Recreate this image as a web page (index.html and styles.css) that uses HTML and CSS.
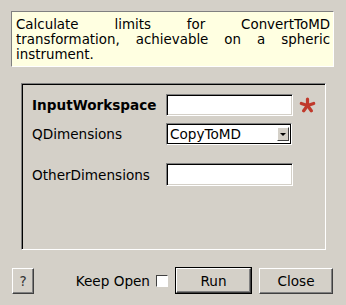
FILE: index.html
```html
<!DOCTYPE html>
<html>
<head>
<meta charset="utf-8">
<link rel="stylesheet" href="styles.css">
</head>
<body>
<div class="dialog">
  <div class="desc">Calculate limits for ConvertToMD transformation, achievable on a spheric instrument.</div>
  <div class="group">
    <div class="row r1">
      <span class="label bold">InputWorkspace</span>
      <span class="field"></span>
      <svg class="star" width="17" height="16" viewBox="0 0 17 16">
        <g stroke="#c0392b" stroke-width="3.2" stroke-linecap="round">
          <line x1="8.5" y1="8.5" x2="8.5" y2="2"/>
          <line x1="8.5" y1="8.5" x2="14.7" y2="6.5"/>
          <line x1="8.5" y1="8.5" x2="12.3" y2="13.8"/>
          <line x1="8.5" y1="8.5" x2="4.7" y2="13.8"/>
          <line x1="8.5" y1="8.5" x2="2.3" y2="6.5"/>
        </g>
      </svg>
    </div>
    <div class="row r2">
      <span class="label">QDimensions</span>
      <div class="combo">
        <span class="combo-text">CopyToMD</span>
        <span class="combo-btn"><span class="tri"></span></span>
      </div>
    </div>
    <div class="row r3">
      <span class="label">OtherDimensions</span>
      <span class="field"></span>
    </div>
  </div>
  <div class="buttons">
    <button class="btn help">?</button>
    <span class="spacer"></span>
    <span class="keep">Keep Open</span>
    <span class="check"></span>
    <span class="default-frame"><button class="btn run">Run</button></span>
    <button class="btn close">Close</button>
  </div>
</div>
</body>
</html>
```

FILE: styles.css
```css
html, body {
  margin: 0;
  padding: 0;
  background: #d4d0c8;
}
.dialog {
  width: 346px;
  height: 305px;
  display: flex;
  flex-direction: column;
  font-family: "DejaVu Sans", sans-serif;
  font-size: 13.6px;
  color: #000;
}
.desc {
  margin: 11px 0 0 11px;
  width: 323px;
  height: 56px;
  box-sizing: border-box;
  background: #ffffe1;
  border-top: 1px solid #808080;
  border-left: 1px solid #808080;
  border-right: 1px solid #ffffff;
  border-bottom: 1px solid #ffffff;
  padding: 5px 3px 0 4px;
  font-size: 13.4px;
  line-height: 15px;
  text-align: justify;
  overflow: hidden;
}
.group {
  margin: 16px 0 0 21px;
  width: 305px;
  height: 167px;
  box-sizing: border-box;
  border-top: 1px solid #808080;
  border-left: 1px solid #808080;
  border-right: 1px solid #ffffff;
  border-bottom: 1px solid #ffffff;
  box-shadow: inset 1px 1px 0 #000;
  padding: 10px 0 0 10px;
  display: flex;
  flex-direction: column;
}
.row {
  display: flex;
  align-items: center;
  height: 22px;
}
.r2 { margin-top: 7px; }
.r3 { margin-top: 18px; height: 23px; }
.label {
  width: 134px;
  flex: none;
}
.bold { font-weight: bold; }
.field {
  width: 127px;
  height: 100%;
  box-sizing: border-box;
  background: #fff;
  border-top: 1px solid #808080;
  border-left: 1px solid #808080;
  border-right: 1px solid #ffffff;
  border-bottom: 1px solid #ffffff;
  box-shadow: inset 1px 1px 0 #000, inset -1px -1px 0 #d4d0c8;
}
.star {
  margin-left: 6px;
  margin-top: -1px;
}
.combo {
  width: 126px;
  height: 22px;
  box-sizing: border-box;
  background: #fff;
  border-top: 1px solid #808080;
  border-left: 1px solid #808080;
  border-right: 1px solid #ffffff;
  border-bottom: 1px solid #ffffff;
  box-shadow: inset 1px 1px 0 #000, inset -1px -1px 0 #000;
  display: flex;
  align-items: center;
  padding: 0 2px 0 3px;
}
.combo-text { flex: 1; }
.combo-btn {
  width: 12px;
  height: 14px;
  box-sizing: border-box;
  background: #d4d0c8;
  border-top: 1px solid #ffffff;
  border-left: 1px solid #ffffff;
  border-right: 1px solid #404040;
  border-bottom: 1px solid #404040;
  display: flex;
  align-items: center;
  justify-content: center;
}
.tri {
  width: 0;
  height: 0;
  border-left: 3px solid transparent;
  border-right: 3px solid transparent;
  border-top: 3px solid #000;
}
.buttons {
  margin-top: 17px;
  display: flex;
  align-items: center;
  padding: 0 13px 0 12px;
}
.btn {
  font-family: "DejaVu Sans", sans-serif;
  font-size: 13.6px;
  color: #000;
  background: #d4d0c8;
  margin: 0;
  padding: 0;
  height: 26px;
  box-sizing: border-box;
  border-top: 1px solid #ffffff;
  border-left: 1px solid #ffffff;
  border-right: 1px solid #404040;
  border-bottom: 1px solid #404040;
  box-shadow: inset -1px -1px 0 #808080;
}
.help { width: 22px; color: #333; }
.spacer { flex: 1; }
.keep { margin-right: 6px; }
.check {
  width: 12px;
  height: 12px;
  box-sizing: border-box;
  background: #fff;
  border-top: 1px solid #404040;
  border-left: 1px solid #404040;
  border-right: 1px solid #ffffff;
  border-bottom: 1px solid #ffffff;
  margin-right: 7px;
}
.default-frame {
  display: flex;
  border: 1px solid #000;
  margin-right: 7px;
}
.run { width: 75px; height: 25px; }
.close { width: 74px; }
```
